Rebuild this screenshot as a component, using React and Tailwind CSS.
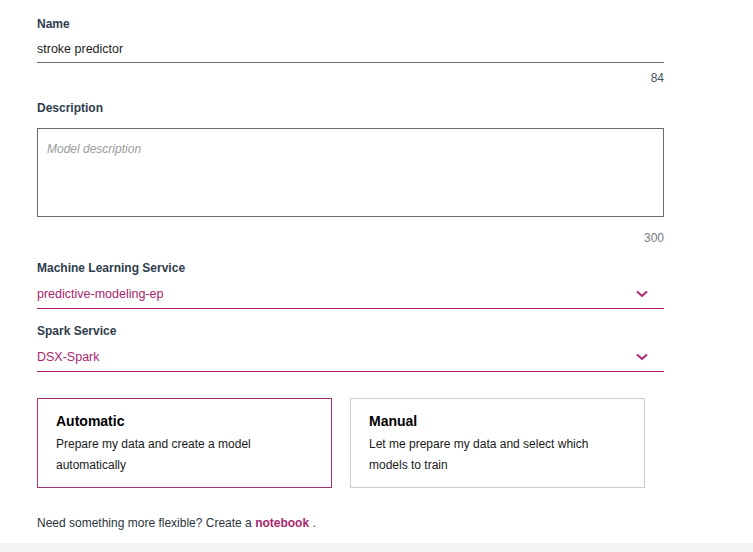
import React from 'react';

const font = { fontFamily: '"Liberation Sans", Arial, sans-serif' };

function Chevron() {
  return (
    <svg width="12" height="8" viewBox="0 0 12 8" className="shrink-0">
      <path d="M1 1.5 L6 6 L11 1.5" fill="none" stroke="#a8286e" strokeWidth="2" />
    </svg>
  );
}

function SelectField({ label, value, top }) {
  return (
    <div className={top}>
      <div className="h-[14px] text-[12px] leading-[14px] font-bold text-[#2f3d4c]">{label}</div>
      <div className="mt-[4px] h-[30px] flex items-center justify-between border-b border-[#a8286e] pr-[16px]">
        <span className="text-[12.5px] text-[#a6266d] pt-[1px]">{value}</span>
        <Chevron />
      </div>
    </div>
  );
}

function Card({ title, text, selected }) {
  return (
    <div
      className={
        'w-[295px] h-[90px] border bg-white px-[18px] pt-[15px] ' +
        (selected ? 'border-[#a3336f]' : 'border-[#cccccc]')
      }
    >
      <div className="text-[14px] leading-[14px] font-bold text-black">{title}</div>
      <p className="mt-[6px] text-[12px] leading-[21px] text-[#1a1a1a] max-w-[236px]">{text}</p>
    </div>
  );
}

export default function App() {
  return (
    <div style={font} className="w-[753px] h-[552px] bg-white flex flex-col">
      <div className="flex-1 pl-[37px] pt-[17px]">
        <div className="w-[627px]">
          <div className="h-[14px] text-[12px] leading-[14px] font-bold text-[#2f3d4c]">Name</div>
          <div className="mt-[4px] h-[28px] flex items-center border-b border-[#6f6f6f] pt-[1px]">
            <span className="text-[12.5px] text-[#1e1e1e]">stroke predictor</span>
          </div>
          <div className="mt-[7px] h-[16px] text-right text-[12px] leading-[16px] text-[#4a5663]">84</div>

          <div className="mt-[15px] h-[14px] text-[12px] leading-[14px] font-bold text-[#2f3d4c]">Description</div>
          <div className="mt-[13px] h-[89px] border border-[#6a6a6a] pl-[9px] pt-[13px]">
            <div className="italic text-[12px] leading-[14px] text-[#9b9b9b]">Model description</div>
          </div>
          <div className="mt-[13px] h-[16px] text-right text-[12px] leading-[16px] text-[#777b80]">300</div>

          <SelectField top="mt-[15px]" label="Machine Learning Service" value="predictive-modeling-ep" />
          <SelectField top="mt-[15px]" label="Spark Service" value="DSX-Spark" />
        </div>

        <div className="mt-[26px] flex gap-[18px]">
          <Card selected title="Automatic" text="Prepare my data and create a model automatically" />
          <Card title="Manual" text="Let me prepare my data and select which models to train" />
        </div>

        <div className="mt-[27px] h-[16px] text-[12px] leading-[16px] text-[#2a3440]">
          Need something more flexible? Create a{' '}
          <span className="font-bold text-[#a6266d]">notebook</span> .
        </div>
      </div>
      <div className="h-[9px] bg-[#f4f4f6]" />
    </div>
  );
}
